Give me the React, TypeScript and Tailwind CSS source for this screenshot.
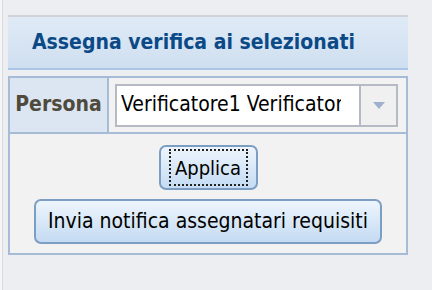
export default function App() {
  const font = { fontFamily: '"DejaVu Sans Condensed", "DejaVu Sans", sans-serif' };

  return (
    <div className="w-[432px] h-[290px] bg-[#eceef1] flex" style={font}>
      {/* left frame edge */}
      <div className="w-[2px] bg-[#f6f6f8]" />
      <div className="w-[1px] bg-[#d9dade]" />
      <div className="w-[5px]" />

      <div className="w-[400px] flex flex-col pt-[15px]">
        <div className="h-[2px] bg-[#d2d3d6]" />

        {/* Header */}
        <div className="h-[53px] flex items-center pl-[24px] bg-gradient-to-b from-[#dfeaf6] to-[#cfdff0] border-b-2 border-[#a9c5e4]">
          <h2 className="text-[21px] font-bold text-[#0b4a87]">Assegna verifica ai selezionati</h2>
        </div>

        {/* Table */}
        <div className="mt-[6px] border-2 border-[#a5bbd6] flex flex-col">
          <div className="h-[56px] flex border-b-2 border-[#a5bbd6]">
            <div className="w-[99px] bg-[#dce6f3] border-r-2 border-[#a5bbd6] flex items-center justify-center">
              <span className="text-[21px] font-bold text-[#4e4a3c]">Persona</span>
            </div>
            <div className="flex-1 bg-[#f2f2f2] flex items-center pl-[6px]">
              <div className="w-[283px] h-[43px] border-2 border-[#b5bac4] bg-white flex items-center">
                <div className="flex-1 flex items-center">
                  <div className="ml-[4px] w-[220px] overflow-hidden">
                    <span className="text-[21px] text-black whitespace-nowrap">Verificatore1 Verificatore</span>
                  </div>
                </div>
                <div className="w-[37px] self-stretch border-l-2 border-[#b5bac4] bg-[#f0f0f0] flex items-center justify-center">
                  <svg width="12" height="7" viewBox="0 0 12 7">
                    <path d="M0 0 L12 0 L6 7 Z" fill="#9fb0cf" />
                  </svg>
                </div>
              </div>
            </div>
          </div>

          <div className="bg-[#f2f2f2] flex flex-col items-center pt-[11px] pb-[9px] gap-[9px]">
            <button className="w-[99px] h-[45px] rounded-[7px] border-2 border-[#7d9ec3] bg-gradient-to-b from-[#eef5fc] to-[#c4dbf3] flex items-center justify-center p-[2px]">
              <span className="w-full h-full mx-[6px] border-2 border-dotted border-[#222] flex items-center justify-center text-[20px] text-black">
                Applica
              </span>
            </button>
            <button className="w-[348px] h-[45px] rounded-[7px] border-2 border-[#7d9ec3] bg-gradient-to-b from-[#eef5fc] to-[#c4dbf3] flex items-center justify-center text-[21px] text-black">
              Invia notifica assegnatari requisiti
            </button>
          </div>
        </div>
      </div>
    </div>
  );
}
